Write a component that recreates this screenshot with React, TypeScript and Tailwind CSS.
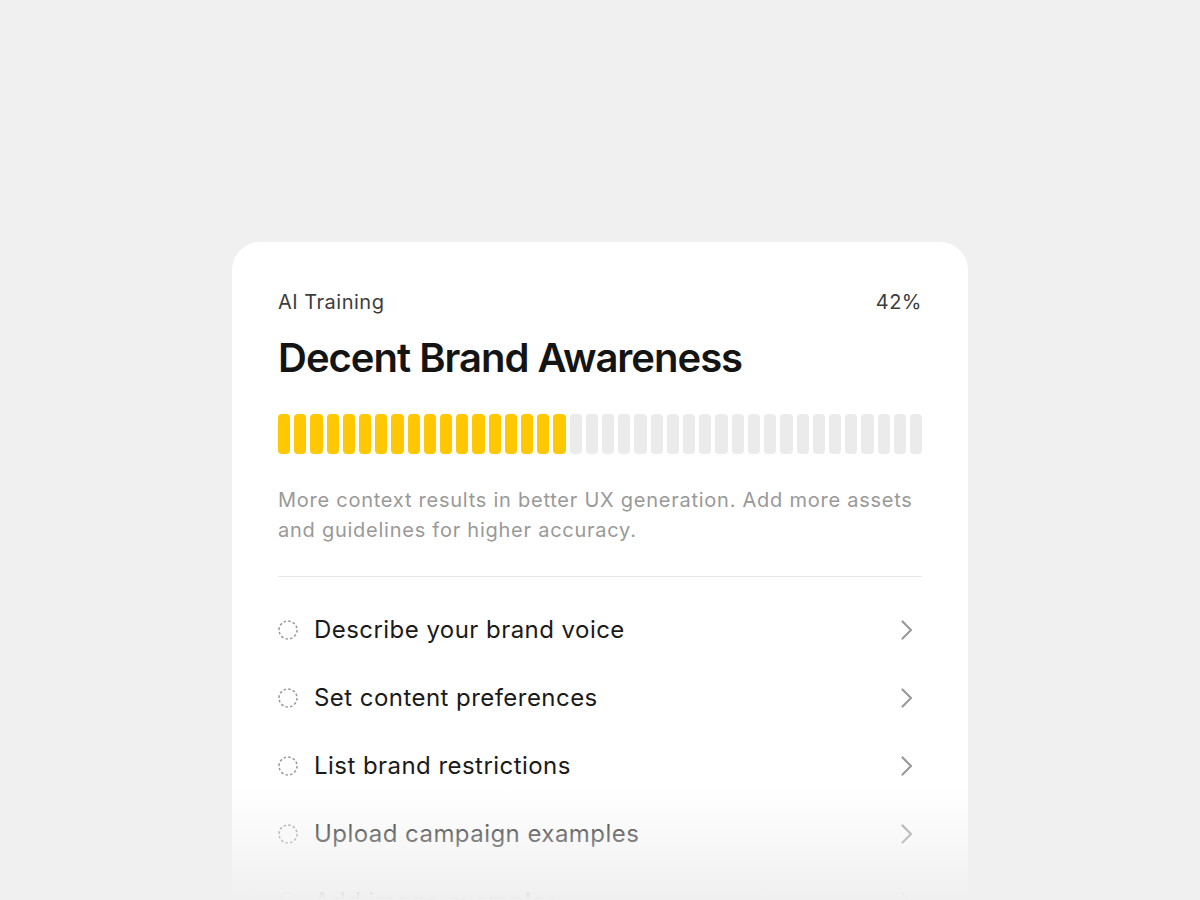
import React from "react";

const items = [
  "Describe your brand voice",
  "Set content preferences",
  "List brand restrictions",
  "Upload campaign examples",
  "Add image examples",
  "Define target audience",
];

function DashedCircle() {
  return (
    <svg width="20" height="20" viewBox="0 0 20 20" className="shrink-0">
      <circle cx="10" cy="10" r="9" fill="none" stroke="#9a9a9a" strokeWidth="1.5" strokeDasharray="2.6 2.1" />
    </svg>
  );
}

function Chevron() {
  return (
    <svg width="14" height="20" viewBox="0 0 14 20" className="shrink-0">
      <path d="M2.5 1.5 L11 10 L2.5 18.5" fill="none" stroke="#9a9a9a" strokeWidth="2.2" strokeLinecap="round" strokeLinejoin="round" />
    </svg>
  );
}

export default function App() {
  const total = 40;
  const filled = 18;
  return (
    <div
      className="relative w-[1200px] h-[900px] overflow-hidden bg-[#f0f0f0] pt-[242px]"
      style={{ fontFamily: "Inter, 'Noto Sans', sans-serif" }}
    >
      <div className="mx-auto w-[736px] rounded-[28px] bg-white px-[46px] pt-[46px] pb-[40px]">
        <div className="flex items-center justify-between text-[20px] leading-[28px] tracking-[0.5px] text-[#3d3d3d]">
          <span>AI Training</span>
          <span>42%</span>
        </div>
        <h1 className="mt-[18px] text-[40px] leading-[48px] font-semibold tracking-[-1px] text-[#141414]">
          Decent Brand Awareness
        </h1>
        <div className="mt-[32px] flex gap-[4px] h-[40px]">
          {Array.from({ length: total }).map((_, i) => (
            <div
              key={i}
              className={
                "flex-1 rounded-[4px] " + (i < filled ? "bg-[#ffc800]" : "bg-[#ebebeb]")
              }
            />
          ))}
        </div>
        <p className="mt-[31px] text-[20px] leading-[30px] tracking-[0.75px] text-[#999999]">
          More context results in better UX generation. Add more assets and guidelines for higher accuracy.
        </p>
        <div className="mt-[31px] h-px bg-[#e8e8e8]" />
        <div className="mt-[19px] flex flex-col">
          {items.map((t) => (
            <div key={t} className="flex h-[68px] items-center">
              <DashedCircle />
              <span className="ml-[16px] flex-1 text-[24px] leading-[32px] tracking-[0.45px] text-[#1a1a1a]">{t}</span>
              <div className="mr-[8px]">
                <Chevron />
              </div>
            </div>
          ))}
        </div>
      </div>
      <div className="pointer-events-none absolute left-0 right-0 bottom-0 h-[112px] bg-gradient-to-b from-[#f0f0f0]/0 to-[#f0f0f0]" />
    </div>
  );
}
